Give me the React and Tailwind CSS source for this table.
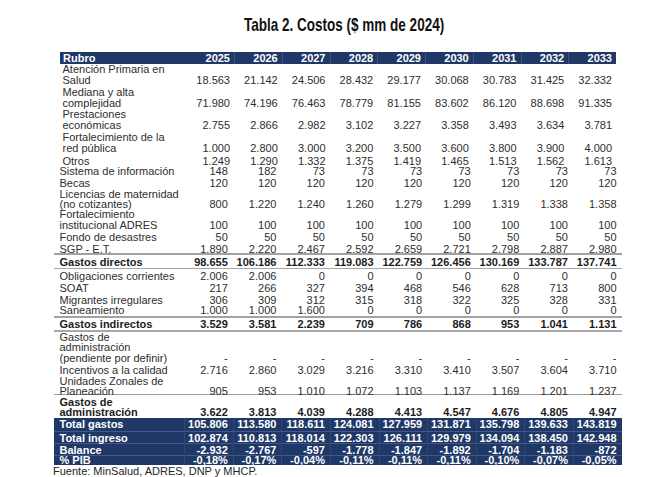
import React from "react";

const TOP_COLS = "grid-cols-[126.25px_repeat(9,47.75px)]";
const BOT_COLS = "grid-cols-[130.2px_repeat(9,48.6px)]";

const years = ["2025", "2026", "2027", "2028", "2029", "2030", "2031", "2032", "2033"];

const topRows = [
  {
    label: "Atención Primaria en\nSalud",
    v: ["18.563", "21.142", "24.506", "28.432", "29.177", "30.068", "30.783", "31.425", "32.332"],
    h: "h-[22.5px]",
    lh: "leading-[11.25px]",
  },
  {
    label: "Mediana y alta\ncomplejidad",
    v: ["71.980", "74.196", "76.463", "78.779", "81.155", "83.602", "86.120", "88.698", "91.335"],
    h: "h-[22.5px]",
    lh: "leading-[11.25px]",
  },
  {
    label: "Prestaciones\neconómicas",
    v: ["2.755", "2.866", "2.982", "3.102", "3.227", "3.358", "3.493", "3.634", "3.781"],
    h: "h-[22.5px]",
    lh: "leading-[11.25px]",
  },
  {
    label: "Fortalecimiento de la\nred pública",
    v: ["1.000", "2.800", "3.000", "3.200", "3.500", "3.600", "3.800", "3.900", "4.000"],
    h: "h-[22.5px]",
    lh: "leading-[11.25px]",
  },
  {
    label: "Otros",
    v: ["1.249", "1.290", "1.332", "1.375", "1.419", "1.465", "1.513", "1.562", "1.613"],
    h: "h-[11px]",
    lh: "leading-[7px]",
  },
];

// "line" entries are the grey rules between blocks
const bottomRows = [
  { label: "Sistema de información", v: ["148", "182", "73", "73", "73", "73", "73", "73", "73"], h: "h-[12px]", lh: "leading-[12px]" },
  { label: "Becas", v: Array(9).fill("120"), h: "h-[12px]", lh: "leading-[12px]" },
  {
    label: "Licencias de maternidad\n(no cotizantes)",
    v: ["800", "1.220", "1.240", "1.260", "1.279", "1.299", "1.319", "1.338", "1.358"],
    h: "h-[19.5px]",
    lh: "leading-[10px]",
  },
  { label: "Fortalecimiento\ninstitucional ADRES", v: Array(9).fill("100"), h: "h-[21.5px]", lh: "leading-[10.5px]" },
  { label: "Fondo de desastres", v: Array(9).fill("50"), h: "h-[13px]", lh: "leading-[11.5px]" },
  {
    label: "SGP - E.T.",
    v: ["1.890", "2.220", "2.467", "2.592", "2.659", "2.721", "2.798", "2.887", "2.980"],
    h: "h-[10px]",
    lh: "leading-[8px]",
  },
  { line: "h-[2px] bg-[#a2a2a2]" },
  {
    label: "Gastos directos",
    v: ["98.655", "106.186", "112.333", "119.083", "122.759", "126.456", "130.169", "133.787", "137.741"],
    h: "h-[13px]",
    lh: "leading-[10.6px]",
    bold: true,
  },
  { line: "h-[1px] bg-[#a8a8a8]" },
  {
    label: "Obligaciones corrientes",
    v: ["2.006", "2.006", "0", "0", "0", "0", "0", "0", "0"],
    h: "h-[12.5px]",
    lh: "leading-[12px]",
  },
  { label: "SOAT", v: ["217", "266", "327", "394", "468", "546", "628", "713", "800"], h: "h-[12px]", lh: "leading-[12px]" },
  {
    label: "Migrantes irregulares",
    v: ["306", "309", "312", "315", "318", "322", "325", "328", "331"],
    h: "h-[12.5px]",
    lh: "leading-[12px]",
  },
  {
    label: "Saneamiento",
    v: ["1.000", "1.000", "1.600", "0", "0", "0", "0", "0", "0"],
    h: "h-[10px]",
    lh: "leading-[9.6px]",
  },
  { line: "h-[2px] bg-[#a2a2a2]" },
  {
    label: "Gastos indirectos",
    v: ["3.529", "3.581", "2.239", "709", "786", "868", "953", "1.041", "1.131"],
    h: "h-[12px]",
    lh: "leading-[9.6px]",
    bold: true,
  },
  { line: "h-[2px] bg-[#a8a8a8]" },
  {
    label: "Gastos de\nadministración\n(pendiente por definir)",
    v: Array(9).fill("-"),
    h: "h-[30.5px]",
    lh: "leading-[10.25px]",
  },
  {
    label: "Incentivos a la calidad",
    v: ["2.716", "2.860", "3.029", "3.216", "3.310", "3.410", "3.507", "3.604", "3.710"],
    h: "h-[13.5px]",
    lh: "leading-[10.6px]",
  },
  {
    label: "Unidades Zonales de\nPlaneación",
    v: ["905", "953", "1.010", "1.072", "1.103", "1.137", "1.169", "1.201", "1.237"],
    h: "h-[18px]",
    lh: "leading-[10.3px]",
    mb: "-mb-[1px]",
  },
  { line: "h-[1px] bg-[#9c9c9c]" },
  {
    label: "Gastos de\nadministración",
    v: ["3.622", "3.813", "4.039", "4.288", "4.413", "4.547", "4.676", "4.805", "4.947"],
    h: "h-[22.5px]",
    lh: "leading-[10.3px]",
    bold: true,
  },
];

const totals = [
  {
    label: "Total gastos",
    v: ["105.806", "113.580", "118.611", "124.081", "127.959", "131.871", "135.798", "139.633", "143.819"],
    h: "h-[13px]",
    lh: "leading-[13px]",
  },
  {
    label: "Total ingreso",
    v: ["102.874", "110.813", "118.014", "122.303", "126.111", "129.979", "134.094", "138.450", "142.948"],
    h: "h-[12.5px]",
    lh: "leading-[12.5px]",
  },
  {
    label: "Balance",
    v: ["-2.932", "-2.767", "-597", "-1.778", "-1.847", "-1.892", "-1.704", "-1.183", "-872"],
    h: "h-[12px]",
    lh: "leading-[12px]",
  },
  {
    label: "% PIB",
    v: ["-0,18%", "-0,17%", "-0,04%", "-0,11%", "-0,11%", "-0,11%", "-0,10%", "-0,07%", "-0,05%"],
    h: "h-[9.5px]",
    lh: "leading-[9px]",
  },
];

function TopRow({ row }) {
  return (
    <div className={`grid ${TOP_COLS} ${row.h} items-end`}>
      <div className={`pl-[2.5px] whitespace-pre-line ${row.lh}`}>{row.label}</div>
      {row.v.map((x, i) => (
        <div key={i} className={`pr-[4px] text-right ${row.lh}`}>
          {x}
        </div>
      ))}
    </div>
  );
}

function BottomRow({ row }) {
  if (row.line) return <div className={row.line} />;
  const mb = row.mb || "";
  return (
    <div className={`grid ${BOT_COLS} ${row.h} items-end ${row.bold ? "font-bold text-[#1c1c1c]" : ""}`}>
      <div className={`pl-[5.5px] whitespace-pre-line ${row.lh} ${mb}`}>{row.label}</div>
      {row.v.map((x, i) => (
        <div key={i} className={`pr-[5px] text-right ${row.lh} ${mb}`}>
          {x}
        </div>
      ))}
    </div>
  );
}

export default function App() {
  return (
    <div className="w-[669px] h-[477px] bg-white overflow-hidden font-['Liberation_Sans',Arial,sans-serif] text-[11px] text-[#2e2e2e]">
      <div className="h-[52px] pt-[14px] flex justify-center">
        <h1 className="ml-[19px] text-[18.5px] leading-[22px] font-bold text-[#111] whitespace-nowrap scale-x-[0.73]">
          Tabla 2. Costos ($ mm de 2024)
        </h1>
      </div>

      <div className="ml-[60px] w-[556px]">
        <div className={`grid ${TOP_COLS} h-[12px] items-center bg-[#1f3865] text-white font-bold leading-[12px]`}>
          <div className="pl-[3px]">Rubro</div>
          {years.map((y, i) => (
            <div key={y} className={`h-full pr-[4px] text-right ${i > 0 ? "border-l border-[#3a5282]" : ""}`}>
              {y}
            </div>
          ))}
        </div>
        {topRows.map((r) => (
          <TopRow key={r.label} row={r} />
        ))}
      </div>

      <div className="ml-[54px] w-[567.6px]">
        {bottomRows.map((r, i) => (
          <BottomRow key={i} row={r} />
        ))}
        <div className="bg-[#1f3865] text-white font-bold">
          {totals.map((r, i) => (
            <div
              key={r.label}
              className={`grid ${BOT_COLS} ${r.h} items-end ${i > 0 ? "border-t border-[#41588a]" : ""}`}
            >
              <div className={`pl-[5.5px] ${r.lh}`}>{r.label}</div>
              {r.v.map((x, j) => (
                <div key={j} className={`h-full flex items-end justify-end pr-[5px] border-l border-[#30477a] ${r.lh}`}>
                  {x}
                </div>
              ))}
            </div>
          ))}
        </div>
      </div>

      <p className="ml-[53px] leading-[13px] text-[#262626]">Fuente: MinSalud, ADRES, DNP y MHCP.</p>
    </div>
  );
}
